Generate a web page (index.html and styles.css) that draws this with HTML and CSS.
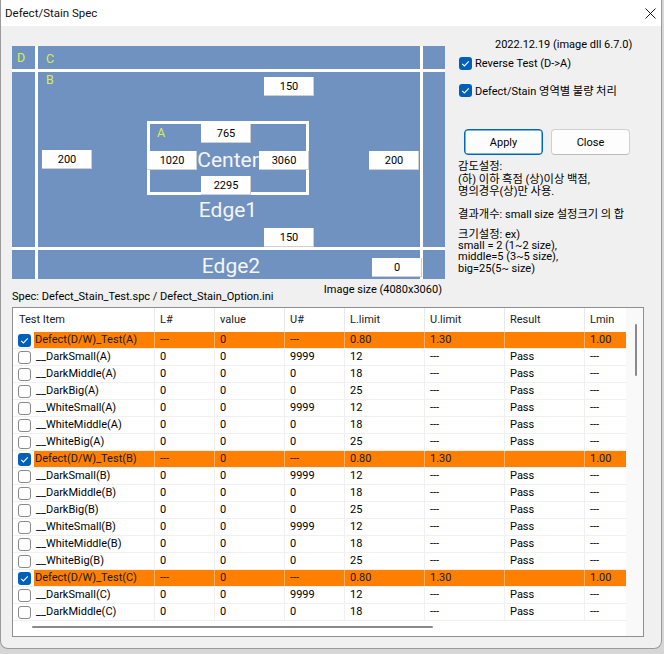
FILE: index.html
```html
<!DOCTYPE html>
<html>
<head>
<meta charset="utf-8">
<link rel="stylesheet" href="styles.css">
</head>
<body>
<div class="window">
  <div class="titlebar">
    <span class="title">Defect/Stain Spec</span>
    <svg class="close" viewBox="0 0 11 11"><path d="M0.5 0.5 L10.5 10.5 M10.5 0.5 L0.5 10.5" stroke="#1a1a1a" stroke-width="1" fill="none"/></svg>
  </div>
  <div class="client">
    <div class="top">
      <div class="diagram">
        <div class="line v1"></div>
        <div class="line v2"></div>
        <div class="line h1"></div>
        <div class="line h2"></div>
        <div class="crect"></div>
        <span class="tag td">D</span>
        <span class="tag tc">C</span>
        <span class="tag tb">B</span>
        <span class="tag ta">A</span>
        <span class="big bcenter">Center</span>
        <span class="big bedge1">Edge1</span>
        <span class="big bedge2">Edge2</span>
        <div class="box b765">765</div>
        <div class="box b1020">1020</div>
        <div class="box b3060">3060</div>
        <div class="box b2295">2295</div>
        <div class="box b200r">200</div>
        <div class="box b200l">200</div>
        <div class="box b150t">150</div>
        <div class="box b150b">150</div>
        <div class="box b0">0</div>
      </div>
      <div class="panel">
        <div class="date">2022.12.19 (image dll 6.7.0)</div>
        <div class="chk"><span class="cb on"><svg viewBox="0 0 13 13"><path d="M3.2 6.8 L5.4 9 L9.8 4.4" fill="none" stroke="#fff" stroke-width="1.1"/></svg></span><span>Reverse Test (D-&gt;A)</span></div>
        <div class="chk"><span class="cb on"><svg viewBox="0 0 13 13"><path d="M3.2 6.8 L5.4 9 L9.8 4.4" fill="none" stroke="#fff" stroke-width="1.1"/></svg></span><span>Defect/Stain <span class="ko">영역별 불량 처리</span></span></div>
        <div class="buttons">
          <div class="btn primary">Apply</div>
          <div class="btn">Close</div>
        </div>
        <div class="note n1"><div><span class="ko">감도설정</span>:</div><div>(<span class="ko">하</span>) <span class="ko">이하 흑점</span> (<span class="ko">상</span>)<span class="ko">이상 백점</span>,</div><div><span class="ko">명의경우</span>(<span class="ko">상</span>)<span class="ko">만 사용</span>.</div></div>
        <div class="note n2"><div><span class="ko">결과개수</span>: small size <span class="ko">설정크기 의 합</span></div></div>
        <div class="note n3"><div><span class="ko">크기설정</span>: ex)</div><div>small = 2 (1~2 size),</div><div>middle=5 (3~5 size),</div><div>big=25(5~ size)</div></div>
      </div>
    </div>
    <div class="specrow">
      <span class="spec">Spec: Defect_Stain_Test.spc / Defect_Stain_Option.ini</span>
      <span class="imgsize">Image size (4080x3060)</span>
    </div>
    <div class="list">
      <div class="rows">
        <div class="hdr"><div>Test Item</div><div>L#</div><div>value</div><div>U#</div><div>L.limit</div><div>U.limit</div><div>Result</div><div>Lmin</div></div>
        <div class="row hl"><div class="item"><span class="cb on"><svg viewBox="0 0 13 13"><path d="M3.2 6.8 L5.4 9 L9.8 4.4" fill="none" stroke="#fff" stroke-width="1.1"/></svg></span><span class="lbl">Defect(D/W)_Test(A)</span></div><div>---</div><div>0</div><div>---</div><div>0.80</div><div>1.30</div><div></div><div>1.00</div></div>
        <div class="row"><div class="item"><span class="cb off"></span><span class="lbl">__DarkSmall(A)</span></div><div>0</div><div>0</div><div>9999</div><div>12</div><div>---</div><div>Pass</div><div>---</div></div>
        <div class="row"><div class="item"><span class="cb off"></span><span class="lbl">__DarkMiddle(A)</span></div><div>0</div><div>0</div><div>0</div><div>18</div><div>---</div><div>Pass</div><div>---</div></div>
        <div class="row"><div class="item"><span class="cb off"></span><span class="lbl">__DarkBig(A)</span></div><div>0</div><div>0</div><div>0</div><div>25</div><div>---</div><div>Pass</div><div>---</div></div>
        <div class="row"><div class="item"><span class="cb off"></span><span class="lbl">__WhiteSmall(A)</span></div><div>0</div><div>0</div><div>9999</div><div>12</div><div>---</div><div>Pass</div><div>---</div></div>
        <div class="row"><div class="item"><span class="cb off"></span><span class="lbl">__WhiteMiddle(A)</span></div><div>0</div><div>0</div><div>0</div><div>18</div><div>---</div><div>Pass</div><div>---</div></div>
        <div class="row"><div class="item"><span class="cb off"></span><span class="lbl">__WhiteBig(A)</span></div><div>0</div><div>0</div><div>0</div><div>25</div><div>---</div><div>Pass</div><div>---</div></div>
        <div class="row hl"><div class="item"><span class="cb on"><svg viewBox="0 0 13 13"><path d="M3.2 6.8 L5.4 9 L9.8 4.4" fill="none" stroke="#fff" stroke-width="1.1"/></svg></span><span class="lbl">Defect(D/W)_Test(B)</span></div><div>---</div><div>0</div><div>---</div><div>0.80</div><div>1.30</div><div></div><div>1.00</div></div>
        <div class="row"><div class="item"><span class="cb off"></span><span class="lbl">__DarkSmall(B)</span></div><div>0</div><div>0</div><div>9999</div><div>12</div><div>---</div><div>Pass</div><div>---</div></div>
        <div class="row"><div class="item"><span class="cb off"></span><span class="lbl">__DarkMiddle(B)</span></div><div>0</div><div>0</div><div>0</div><div>18</div><div>---</div><div>Pass</div><div>---</div></div>
        <div class="row"><div class="item"><span class="cb off"></span><span class="lbl">__DarkBig(B)</span></div><div>0</div><div>0</div><div>0</div><div>25</div><div>---</div><div>Pass</div><div>---</div></div>
        <div class="row"><div class="item"><span class="cb off"></span><span class="lbl">__WhiteSmall(B)</span></div><div>0</div><div>0</div><div>9999</div><div>12</div><div>---</div><div>Pass</div><div>---</div></div>
        <div class="row"><div class="item"><span class="cb off"></span><span class="lbl">__WhiteMiddle(B)</span></div><div>0</div><div>0</div><div>0</div><div>18</div><div>---</div><div>Pass</div><div>---</div></div>
        <div class="row"><div class="item"><span class="cb off"></span><span class="lbl">__WhiteBig(B)</span></div><div>0</div><div>0</div><div>0</div><div>25</div><div>---</div><div>Pass</div><div>---</div></div>
        <div class="row hl"><div class="item"><span class="cb on"><svg viewBox="0 0 13 13"><path d="M3.2 6.8 L5.4 9 L9.8 4.4" fill="none" stroke="#fff" stroke-width="1.1"/></svg></span><span class="lbl">Defect(D/W)_Test(C)</span></div><div>---</div><div>0</div><div>---</div><div>0.80</div><div>1.30</div><div></div><div>1.00</div></div>
        <div class="row"><div class="item"><span class="cb off"></span><span class="lbl">__DarkSmall(C)</span></div><div>0</div><div>0</div><div>9999</div><div>12</div><div>---</div><div>Pass</div><div>---</div></div>
        <div class="row"><div class="item"><span class="cb off"></span><span class="lbl">__DarkMiddle(C)</span></div><div>0</div><div>0</div><div>0</div><div>18</div><div>---</div><div>Pass</div><div>---</div></div>
      </div>
      <div class="vscroll"><div class="vthumb"></div></div>
      <div class="hscroll"><div class="hthumb"></div></div>
    </div>
  </div>
</div>
</body>
</html>
```

FILE: styles.css
```css
* { box-sizing: border-box; }
html, body { margin: 0; padding: 0; }
body {
  width: 664px;
  height: 654px;
  background: #d6d6d6;
  font-family: Roboto, "Noto Sans CJK KR", sans-serif;
  font-size: 11px;
  color: #000;
  overflow: hidden;
}
.ko { font-family: "Noto Sans CJK KR", sans-serif; font-size: 11.3px; }
.window {
  width: 662px;
  height: 649px;
  background: #f0f0f0;
  border: 1px solid #9a9a9a;
  border-top: 0;
  border-radius: 0 0 8px 8px;
  overflow: hidden;
}
.titlebar {
  height: 26px;
  background: #fff;
  display: flex;
  align-items: center;
  justify-content: space-between;
  padding: 0 5px 0 4px;
}
.title { font-size: 11.5px; line-height: 26px; color: #111; }
.close { width: 11px; height: 11px; }
.client { padding: 10px 0 0 11px; }
.top { display: flex; align-items: flex-start; }

.diagram {
  position: relative;
  width: 433px;
  height: 233px;
  margin-top: 10px;
  background: #7092c0;
  overflow: hidden;
}
.line { position: absolute; background: #fff; }
.v1 { left: 23px; top: 0; width: 3px; height: 233px; }
.v2 { left: 408px; top: 0; width: 3px; height: 233px; }
.h1 { left: 0; top: 23px; width: 433px; height: 3px; }
.h2 { left: 0; top: 201px; width: 433px; height: 3px; }
.crect {
  position: absolute;
  left: 135px; top: 75px;
  width: 162px; height: 74px;
  border: 3px solid #fff;
}
.tag { position: absolute; color: #dbee4c; font-size: 12.5px; line-height: 14px; }
.td { left: 5px; top: 5px; }
.tc { left: 34px; top: 6px; }
.tb { left: 34px; top: 27px; }
.ta { left: 145px; top: 80px; }
.big {
  position: absolute;
  width: 120px;
  text-align: center;
  color: #f5f5f5;
  font-size: 21px;
  line-height: 24px;
}
.bcenter { left: 156px; top: 102px; }
.bedge1 { left: 156px; top: 152px; }
.bedge2 { left: 159px; top: 208px; }
.box {
  position: absolute;
  width: 50px; height: 19px;
  background: #fff;
  text-align: center;
  line-height: 19px;
  box-shadow: inset -1px -1px 0 #cfcfcf;
}
.b765 { left: 189px; top: 78px; }
.b1020 { left: 135px; top: 105px; }
.b3060 { left: 247px; top: 105px; }
.b2295 { left: 189px; top: 130px; }
.b200r { left: 357px; top: 105px; }
.b200l { left: 30px; top: 104px; }
.b150t { left: 252px; top: 31px; }
.b150b { left: 252px; top: 182px; }
.b0 { left: 360px; top: 212px; }

.panel { margin-left: 8px; width: 190px; display: flex; flex-direction: column; }
.date { padding-left: 42px; line-height: 18px; height: 18px; white-space: nowrap; }
.chk { display: flex; align-items: center; height: 18px; padding-left: 6px; gap: 3px; white-space: nowrap; }
.chk + .chk { margin-top: 9px; }
.cb { width: 13px; height: 13px; border-radius: 3px; flex: none; display: block; }
.cb svg { display: block; width: 13px; height: 13px; }
.cb.on { background: #005fb8; }
.cb.off { background: #fff; border: 1px solid #8a8a8a; }
.buttons { display: flex; gap: 8px; padding-left: 11px; margin-top: 30px; }
.btn {
  width: 79px; height: 26px;
  border-radius: 4px;
  background: #fdfdfd;
  border: 1px solid #d0d0d0;
  border-bottom-color: #bdbdbd;
  display: flex; align-items: center; justify-content: center;
}
.btn.primary { border: 1px solid #0067c0; box-shadow: inset 0 0 0 0.5px #0067c0; }
.note { padding-left: 5px; white-space: nowrap; }
.n1 { margin-top: 4px; }
.n1 > div { height: 12.5px; line-height: 12.5px; }
.n2 { margin-top: 10.5px; }
.n2 > div { height: 12px; line-height: 12px; }
.n3 { margin-top: 9px; }
.n3 > div { height: 11.7px; line-height: 11.7px; }

.specrow {
  display: flex;
  justify-content: space-between;
  align-items: flex-start;
  width: 433px;
  height: 28px;
  white-space: nowrap;
}
.spec { margin-top: 11px; line-height: 14px; }
.imgsize { margin-top: 4px; line-height: 14px; margin-right: 3px; }

.list {
  width: 632px;
  height: 330px;
  border: 1px solid #8f8f8f;
  background: #fff;
  display: grid;
  grid-template-columns: 613px 17px;
  grid-template-rows: 313px 15px;
}
.rows { overflow: hidden; grid-column: 1; grid-row: 1; }
.vscroll { position: relative; grid-column: 2; grid-row: 1 / 3; background: #f9f9f9; }
.vthumb { position: absolute; left: 9px; top: 16px; width: 2px; height: 52px; background: #8a8a8a; border-radius: 1px; }
.hscroll { position: relative; grid-column: 1; grid-row: 2; }
.hthumb { position: absolute; left: 19px; top: 5px; width: 401px; height: 2px; background: #8a8a8a; border-radius: 1px; }

.hdr, .row {
  display: grid;
  grid-template-columns: 141px 60px 70px 60px 80px 80px 80px 42px;
}
.hdr { height: 24px; }
.hdr > div {
  line-height: 24px;
  padding-left: 5px;
  border-left: 1px solid #e8e8e8;
  white-space: nowrap;
  overflow: hidden;
  color: #1a1a1a;
}
.hdr > div:first-child { border-left: 0; padding-left: 6px; }
.row { height: 17px; border-bottom: 1px solid #f0f0f0; }
.row > div {
  line-height: 16px;
  height: 16px;
  padding-left: 5px;
  border-left: 1px solid #f0f0f0;
  white-space: nowrap;
  overflow: hidden;
}
.row > .item { border-left: 0; display: flex; align-items: center; }
.item .cb { margin-right: 3px; }
.item .lbl { flex: 1; height: 16px; padding-left: 2px; }
.row.hl > div:not(.item) { background: #ff8000; border-left-color: #ffb366; color: #1a1a1a; }
.row.hl .lbl { background: #ff8000; padding-left: 1px; color: #1a1a1a; }
```
